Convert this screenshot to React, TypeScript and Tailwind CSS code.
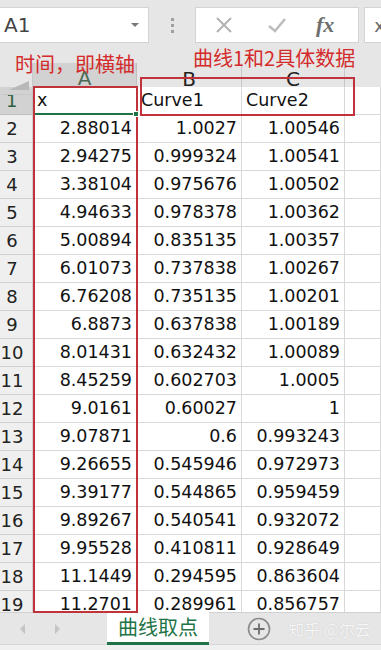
import React from "react";

const ROWS: [string, string, string][] = [
  ["2.88014", "1.0027", "1.00546"],
  ["2.94275", "0.999324", "1.00541"],
  ["3.38104", "0.975676", "1.00502"],
  ["4.94633", "0.978378", "1.00362"],
  ["5.00894", "0.835135", "1.00357"],
  ["6.01073", "0.737838", "1.00267"],
  ["6.76208", "0.735135", "1.00201"],
  ["6.8873", "0.637838", "1.00189"],
  ["8.01431", "0.632432", "1.00089"],
  ["8.45259", "0.602703", "1.0005"],
  ["9.0161", "0.60027", "1"],
  ["9.07871", "0.6", "0.993243"],
  ["9.26655", "0.545946", "0.972973"],
  ["9.39177", "0.544865", "0.959459"],
  ["9.89267", "0.540541", "0.932072"],
  ["9.95528", "0.410811", "0.928649"],
  ["11.1449", "0.294595", "0.863604"],
  ["11.2701", "0.289961", "0.856757"],
];

const cell = "h-[28px] border-b border-r border-[#d9d9d9] flex items-center px-[4px] bg-white";
const grid = "grid grid-cols-[33px_104px_105px_103px_1fr]";

function TopBar() {
  return (
    <div className="h-[63px] bg-[#e6e6e6] flex items-start pt-[7px] gap-0">
      <div className="w-[149px] h-[36px] bg-white border border-[#d4d4d4] border-l-0 flex items-center pl-[4px] pr-[9px]">
        <span className="text-[20px] text-[#444] flex-1">A1</span>
        <span className="w-0 h-0 border-l-[4px] border-r-[4px] border-t-[4px] border-l-transparent border-r-transparent border-t-[#777]" />
      </div>
      <div className="w-[46px] h-[36px] flex flex-col items-center justify-center gap-[3px]">
        <span className="w-[3px] h-[3px] bg-[#a0a0a0]" />
        <span className="w-[3px] h-[3px] bg-[#a0a0a0]" />
        <span className="w-[3px] h-[3px] bg-[#a0a0a0]" />
      </div>
      <div className="w-[164px] h-[36px] bg-white border border-[#d4d4d4] flex items-center">
        <svg width="20" height="20" viewBox="0 0 20 20" className="ml-[18px]">
          <path d="M3 3 L17 17 M17 3 L3 17" stroke="#b3b3b3" strokeWidth="2" />
        </svg>
        <svg width="20" height="20" viewBox="0 0 20 20" className="ml-[33px]">
          <path d="M2 11 L8 16 L18 4" stroke="#bdbdbd" strokeWidth="2.6" fill="none" />
        </svg>
        <span className="ml-[29px] text-[22px] italic text-[#6e6e6e] font-['Liberation_Serif',serif] font-bold leading-none">
          fx
        </span>
      </div>
      <div className="ml-[5px] flex-1 h-[36px] bg-white border border-[#d4d4d4] border-r-0 flex items-center justify-end overflow-hidden">
        <span className="text-[18px] text-[#666] mr-[-4px]">x</span>
      </div>
    </div>
  );
}

function HeaderRow() {
  return (
    <div className={`${grid} h-[24px] bg-[#e6e6e6]`}>
      <div className="relative border-r border-b border-[#c8c8c8]">
        <div className="absolute right-[3px] bottom-[4px] w-0 h-0 border-l-[20px] border-t-[9px] border-l-transparent border-t-transparent border-b-0 border-r-0 border-solid [border-right-color:transparent]" style={{ borderBottom: "9px solid #b8b8b8", borderTop: "0", borderLeft: "20px solid transparent" }} />
      </div>
      <div className="bg-[#d2d2d2] border-r border-b-2 border-[#c0c0c0] border-b-[#217346] flex items-center justify-center text-[20px] text-[#4b6b57]">A</div>
      <div className="border-r border-b border-[#c8c8c8] flex items-center justify-center text-[20px] text-[#222]">B</div>
      <div className="border-r border-b border-[#c8c8c8] flex items-center justify-center text-[20px] text-[#222]">C</div>
      <div className="border-b border-[#c8c8c8]" />
    </div>
  );
}

function Sheet() {
  return (
    <div className="h-[525px] overflow-hidden">
      <div className={grid}>
        <div className="h-[28px] bg-[#d2d2d2] border-r border-b border-[#c0c0c0] flex items-center pl-[6px] text-[18px] text-[#2d5f3e]">1</div>
        <div className={`${cell} relative`}>
          <span>x</span>
          <div className="absolute left-0 right-[-1px] bottom-[-1px] h-[2px] bg-[#217346]" />
          <div className="absolute right-[-3px] bottom-[-3px] w-[6px] h-[6px] bg-[#217346] border border-white z-10" />
        </div>
        <div className={cell}>Curve1</div>
        <div className={cell}>Curve2</div>
        <div className={cell} />
        {ROWS.map((r, i) => (
          <React.Fragment key={i}>
            <div className="h-[28px] bg-[#efefef] border-r border-b border-[#d0d0d0] flex items-center justify-center pr-[8px] text-[18px] text-[#222]">
              {i + 2}
            </div>
            <div className={`${cell} justify-end`}>{r[0]}</div>
            <div className={`${cell} justify-end`}>{r[1]}</div>
            <div className={`${cell} justify-end`}>{r[2]}</div>
            <div className={cell} />
          </React.Fragment>
        ))}
      </div>
    </div>
  );
}

function TabBar() {
  return (
    <div className="bg-[#e6e6e6]">
      <div className="h-[32px] flex items-center border-t border-[#d0d0d0]">
        <div className="w-[107px] flex items-center">
          <span className="ml-[20px] w-0 h-0 border-t-[5px] border-b-[5px] border-r-[5px] border-t-transparent border-b-transparent border-r-[#c4c4c4]" />
          <span className="ml-[30px] w-0 h-0 border-t-[5px] border-b-[5px] border-l-[5px] border-t-transparent border-b-transparent border-l-[#c4c4c4]" />
        </div>
        <div className="w-[102px] h-[33px] -mt-[1px] bg-white border-b-[3px] border-[#217346] flex items-center justify-center text-[20px] text-[#217346] font-['Noto_Sans_CJK_SC',sans-serif]">
          曲线取点
        </div>
        <svg width="24" height="24" viewBox="0 0 24 24" className="ml-[38px]">
          <circle cx="12" cy="12" r="10.5" fill="none" stroke="#8a8a8a" strokeWidth="1.6" />
          <path d="M12 6.5 V17.5 M6.5 12 H17.5" stroke="#6d6d6d" strokeWidth="1.8" />
        </svg>
        <span className="ml-[17px] text-[16px] text-[#f7f7f7] font-['Noto_Sans_CJK_SC',sans-serif] [text-shadow:0_0_1px_#bbb]">
          知乎 @尔云
        </span>
      </div>
      <div className="h-[6px] bg-[#f0f0f0] border-t border-[#d6d6d6]" />
    </div>
  );
}

export default function App() {
  return (
    <div className="relative w-[381px] h-[650px] overflow-hidden bg-white text-[17.5px] text-[#111] font-['DejaVu_Sans','Noto_Sans_CJK_SC',sans-serif]">
      <TopBar />
      <HeaderRow />
      <Sheet />
      <TabBar />

      {/* annotations drawn over the sheet */}
      <div className="absolute left-[15px] top-[52px] text-[20px] leading-[24px] text-[#d42b2b] font-['Noto_Sans_CJK_SC',sans-serif]">
        时间，即横轴
      </div>
      <div className="absolute left-[193px] top-[46px] text-[20px] leading-[24px] text-[#d42b2b] font-['Noto_Sans_CJK_SC',sans-serif]">
        曲线1和2具体数据
      </div>
      <div className="absolute left-[33px] top-[86px] w-[105px] h-[527px] border-2 border-[#c0333a]" />
      <div className="absolute left-[140px] top-[77px] w-[215px] h-[39px] border-2 border-[#c0333a]" />
    </div>
  );
}
